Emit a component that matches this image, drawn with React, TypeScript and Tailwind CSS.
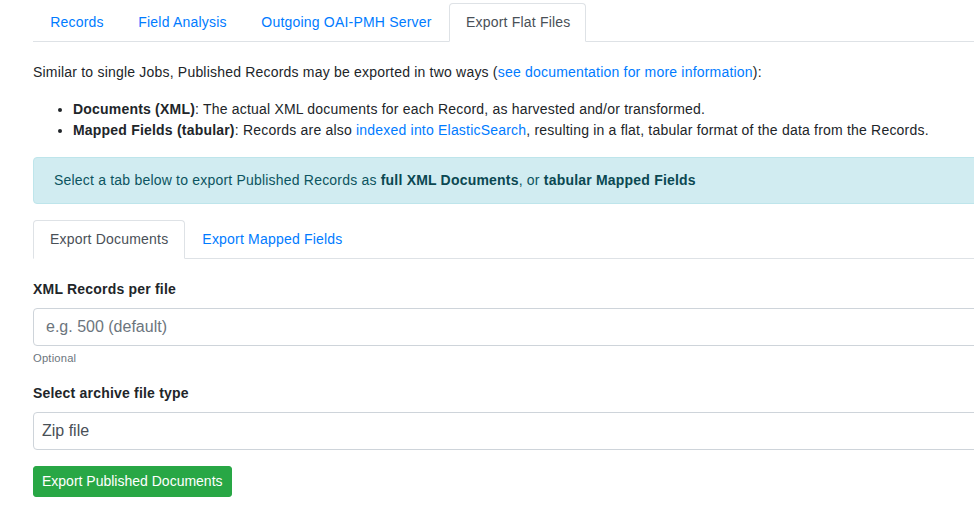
import React, { useState } from "react";

const TOP_TABS: { label: string; width: string }[] = [
  { label: "Records", width: "w-[88px]" },
  { label: "Field Analysis", width: "w-[123px]" },
  { label: "Outgoing OAI-PMH Server", width: "w-[205px]" },
  { label: "Export Flat Files", width: "w-[137px]" },
];

const EXPORT_TABS = ["Export Documents", "Export Mapped Fields"];

function Tabs({
  items,
  active,
  onSelect,
}: {
  items: { label: string; width?: string }[];
  active: string;
  onSelect: (label: string) => void;
}): React.ReactElement {
  return (
    <ul className="flex border-b border-[#dee2e6]">
      {items.map(({ label, width }) => (
        <li key={label} className="-mb-px">
          <a
            href="#"
            onClick={(e) => {
              e.preventDefault();
              onSelect(label);
            }}
            className={[
              "block rounded-t-[4px] border px-4 py-2 text-center whitespace-nowrap",
              width ?? "",
              active === label
                ? "border-[#dee2e6] border-b-white bg-white text-[#495057]"
                : "border-transparent text-[#007bff]",
            ].join(" ")}
          >
            {label}
          </a>
        </li>
      ))}
    </ul>
  );
}

export default function App(): React.ReactElement {
  const [topTab, setTopTab] = useState("Export Flat Files");
  const [exportTab, setExportTab] = useState("Export Documents");
  const [perFile, setPerFile] = useState("");
  const [archive, setArchive] = useState("zip");

  return (
    <div className="h-[519px] w-[974px] overflow-hidden bg-white font-['Liberation_Sans',Arial,sans-serif] text-[14px] leading-[21px] tracking-[0.2px] text-[#212529]">
      <div className="w-[1200px] pt-[3px] pl-[33px]">
        <Tabs items={TOP_TABS} active={topTab} onSelect={setTopTab} />

        <p className="mt-5 mb-4">
          Similar to single Jobs, Published Records may be exported in two ways (
          <a href="#" className="text-[#007bff]">
            see documentation for more information
          </a>
          ):
        </p>

        <ul className="mb-4 list-disc pl-10">
          <li>
            <span className="font-bold">Documents (XML)</span>: The actual XML documents for each
            Record, as harvested and/or transformed.
          </li>
          <li>
            <span className="font-bold">Mapped Fields (tabular)</span>: Records are also{" "}
            <a href="#" className="text-[#007bff]">
              indexed into ElasticSearch
            </a>
            , resulting in a flat, tabular format of the data from the Records.
          </li>
        </ul>

        <div className="mb-4 rounded-[4px] border border-[#bee5eb] bg-[#d1ecf1] px-5 py-3 text-[#0c5460]">
          Select a tab below to export Published Records as{" "}
          <span className="font-bold text-[#0a4852]">full XML Documents</span>, or{" "}
          <span className="font-bold text-[#0a4852]">tabular Mapped Fields</span>
        </div>

        <Tabs
          items={EXPORT_TABS.map((label) => ({ label }))}
          active={exportTab}
          onSelect={setExportTab}
        />

        <form className="pt-5" onSubmit={(e) => e.preventDefault()}>
          <div className="mb-4">
            <label className="mb-2 block font-bold">XML Records per file</label>
            <input
              type="text"
              value={perFile}
              onChange={(e) => setPerFile(e.target.value)}
              placeholder="e.g. 500 (default)"
              className="block h-[38px] w-full rounded-[4px] border border-[#ced4da] bg-white px-3 py-1.5 text-[16px] leading-6 tracking-normal text-[#495057] placeholder:text-[#6c757d] focus:outline-none"
            />
            <small className="mt-1 block text-[11.2px] leading-[16.8px] text-[#6c757d]">
              Optional
            </small>
          </div>

          <div className="mb-4">
            <label className="mb-2 block font-bold">Select archive file type</label>
            <select
              value={archive}
              onChange={(e) => setArchive(e.target.value)}
              className="block h-[38px] w-full appearance-none rounded-[4px] border border-[#ced4da] bg-white px-2 text-[16px] leading-6 tracking-normal text-[#495057] focus:outline-none"
            >
              <option value="zip">Zip file</option>
              <option value="targz">Tar file</option>
            </select>
          </div>

          <button
            type="submit"
            className="rounded-[3px] border border-[#28a745] bg-[#28a745] px-2 py-1 text-[14px] leading-[21px] tracking-normal text-white"
          >
            Export Published Documents
          </button>
        </form>
      </div>
    </div>
  );
}
